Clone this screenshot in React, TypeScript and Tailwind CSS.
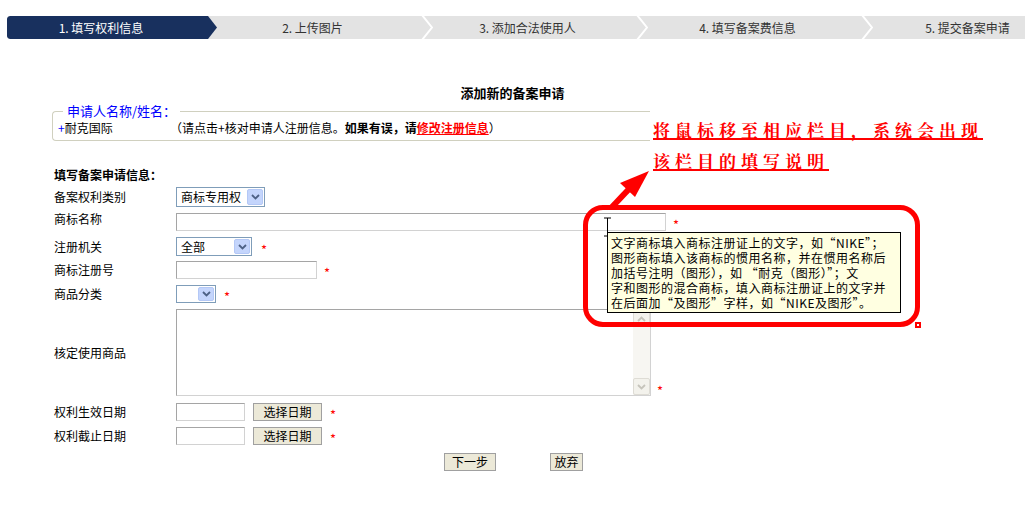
import React from 'react';

const Chevron = ({ color = '#4d6185' }: { color?: string }) => (
  <svg width="9" height="6" viewBox="0 0 9 6">
    <path d="M1 1 L4.5 4.5 L8 1" stroke={color} strokeWidth="1.8" fill="none" />
  </svg>
);

const Select = ({ className, value }: { className: string; value?: string }) => (
  <div className={`flex h-full items-center border border-[#7f9db9] bg-white ${className}`}>
    <span className="flex-1 pl-[4px] text-[12px] leading-none whitespace-nowrap">{value}</span>
    <span className="my-px mr-px flex h-[calc(100%-2px)] w-[16px] items-center justify-center rounded-[2px] border border-[#b4c8f6] bg-[#c4d5fc]">
      <Chevron />
    </span>
  </div>
);

const Input = ({ className }: { className: string }) => (
  <div className={`h-full border border-[#a5a5a5] border-r-[#d2d2d2] border-b-[#d2d2d2] bg-white ${className}`} />
);

const Star = ({ className = 'ml-[7px]' }: { className?: string }) => (
  <span className={`text-[13px] leading-none text-[#ff0000] ${className}`}>*</span>
);

const Btn = ({ children, className }: { children: React.ReactNode; className: string }) => (
  <div
    className={`flex h-full items-center justify-center border border-[#a0a0a0] bg-[#ece9d8] text-[12px] leading-none ${className}`}
  >
    {children}
  </div>
);

const SepChevron = () => (
  <svg className="absolute top-0 right-[-1px]" width="12" height="23" viewBox="0 0 12 23">
    <polyline points="1,-1 11,11.5 1,24" stroke="#ffffff" strokeWidth="2" fill="none" />
  </svg>
);

const steps = ['2. 上传图片', '3. 添加合法使用人', '4. 填写备案费信息', '5. 提交备案申请'];
const stepWidths = ['w-[215px]', 'w-[215px]', 'w-[225px]', 'w-[215px]'];

export default function App() {
  return (
    <div className="relative h-[515px] w-[1025px] overflow-hidden bg-white text-black [font-family:'Noto_Sans_CJK_SC',sans-serif]">
      {/* Step bar */}
      <div className="mt-[16px] ml-[7px] flex h-[23px] overflow-hidden rounded-l-[3px] bg-[#e3e3e3] text-[12px]">
        <div className="flex w-[210px] shrink-0 items-center justify-center rounded-l-[3px] bg-[#18305e] pr-[22px] text-white [clip-path:polygon(0_0,calc(100%_-_9px)_0,100%_50%,calc(100%_-_9px)_100%,0_100%)]">
          1. 填写权利信息
        </div>
        {steps.map((s, i) => (
          <div
            key={s}
            className={`relative flex shrink-0 items-center justify-center pr-[24px] whitespace-nowrap text-[#333333] ${stepWidths[i]}`}
          >
            {s}
            {i < 3 && <SepChevron />}
          </div>
        ))}
      </div>

      {/* Title */}
      <div className="mt-[47px] text-center text-[13px] leading-[14px] font-bold">添加新的备案申请</div>

      {/* Applicant fieldset */}
      <fieldset className="mt-[4px] ml-[52px] w-[598px] rounded-l-[4px] border border-r-0 border-[#d0d0bf]">
        <legend className="ml-[10px] px-[4px] text-[13px] leading-[14px] text-[#0000ff]">申请人名称/姓名：</legend>
        <div className="flex h-[22px] items-center pb-[3px] pl-[5px] text-[12px] leading-none whitespace-nowrap">
          <span className="w-[112px]">
            <span className="text-[#0000ff]">+</span>耐克国际
          </span>
          <span>
            （请点击+核对申请人注册信息。<b>如果有误，请</b>
            <b className="text-[#ff0000] underline">修改注册信息</b>）
          </span>
        </div>
      </fieldset>

      {/* Form */}
      <div className="ml-[54px] text-[12px]">
        <div className="mt-[28px] leading-[12px] font-bold">填写备案申请信息：</div>

        <div className="mt-[6px] flex h-[20px] items-center">
          <div className="w-[122px]">备案权利类别</div>
          <Select className="w-[89px]" value="商标专用权" />
        </div>

        <div className="mt-[6px] flex h-[18px] items-center">
          <div className="w-[122px] self-start leading-[12px]">商标名称</div>
          <Input className="w-[490px]" />
          <Star className="mt-[5px] ml-[7px]" />
        </div>

        <div className="mt-[6px] flex h-[19px] items-center">
          <div className="w-[122px]">注册机关</div>
          <Select className="w-[76px]" value="全部" />
          <Star className="mt-[5px] ml-[9px]" />
        </div>

        <div className="mt-[5px] flex h-[18px] items-center">
          <div className="w-[122px]">商标注册号</div>
          <Input className="w-[141px]" />
          <Star className="mt-[5px] ml-[7px]" />
        </div>

        <div className="mt-[6px] flex h-[18px] items-center">
          <div className="w-[122px]">商品分类</div>
          <Select className="w-[40px]" />
          <Star className="mt-[5px] ml-[8px]" />
        </div>

        <div className="mt-[6px] flex h-[87px] items-center">
          <div className="w-[122px]">核定使用商品</div>
          <div className="flex h-full w-[475px] border border-[#a5a5a5] border-r-[#d2d2d2] border-b-[#d2d2d2] bg-white">
            <div className="flex-1" />
            <div className="flex w-[17px] flex-col bg-[#f7f6f2]">
              <div className="flex h-[17px] items-center justify-center rounded-[2px] border border-[#dedcd5] bg-[#f3f2ec] [&_svg]:rotate-180">
                <Chevron color="#c6c4bb" />
              </div>
              <div className="flex-1" />
              <div className="flex h-[17px] items-center justify-center rounded-[2px] border border-[#dedcd5] bg-[#f3f2ec]">
                <Chevron color="#c6c4bb" />
              </div>
            </div>
          </div>
          <Star className="mb-[-1px] ml-[6px] self-end" />
        </div>

        <div className="mt-[7px] flex h-[18px] items-center">
          <div className="w-[122px]">权利生效日期</div>
          <Input className="w-[69px]" />
          <Btn className="ml-[8px] w-[69px]">选择日期</Btn>
          <Star className="mt-[5px] ml-[8px]" />
        </div>

        <div className="mt-[6px] flex h-[18px] items-center">
          <div className="w-[122px]">权利截止日期</div>
          <Input className="w-[69px]" />
          <Btn className="ml-[8px] w-[69px]">选择日期</Btn>
          <Star className="mt-[5px] ml-[8px]" />
        </div>

        <div className="mt-[8px] flex h-[18px]">
          <Btn className="ml-[390px] w-[52px]">下一步</Btn>
          <Btn className="ml-[54px] w-[33px]">放弃</Btn>
        </div>
      </div>

      {/* Annotation overlay */}
      <div className="absolute top-[117px] left-[653px] text-[17px] font-bold text-[#ff0000] [font-family:'Noto_Serif_CJK_SC','Noto_Sans_CJK_SC',serif]">
        <div className="inline-block border-b-2 border-[#ff0000] pb-px leading-[15px] tracking-[5px] whitespace-nowrap">
          将鼠标移至相应栏目，系统会出现
        </div>
        <br />
        <div className="mt-[10px] inline-block border-b-2 border-[#ff0000] pb-px leading-[15px] tracking-[5px] whitespace-nowrap">
          该栏目的填写说明
        </div>
      </div>

      {/* Arrow */}
      <svg className="absolute top-[160px] left-[600px]" width="60" height="60" viewBox="0 0 60 60">
        <line x1="12" y1="47" x2="29" y2="29" stroke="#ff0000" strokeWidth="6" />
        <polygon points="49,11 20,23 35,37" fill="#ff0000" />
      </svg>

      {/* Red highlight frame */}
      <div className="absolute top-[205px] left-[583px] h-[122px] w-[337px] rounded-[20px] border-[5px] border-[#ff0000]" />
      <div className="absolute top-[322px] left-[915px] h-[6px] w-[6px] border-[2px] border-[#ff0000] bg-white" />

      {/* Text cursor */}
      <svg className="absolute top-[217px] left-[603px]" width="9" height="20" viewBox="0 0 9 20">
        <path d="M1 1 H8 M4.5 1 V19 M1 19 H8" stroke="#000000" strokeWidth="1" fill="none" />
      </svg>

      {/* Tooltip */}
      <div className="absolute top-[232px] left-[607px] w-[294px] border border-black bg-[#ffffe1] px-[3px] py-[2px] text-[12px] leading-[15px] tracking-[0.5px] whitespace-nowrap">
        <div>文字商标填入商标注册证上的文字，如“NIKE”；</div>
        <div>图形商标填入该商标的惯用名称，并在惯用名称后</div>
        <div>加括号注明（图形），如 “耐克（图形）”；文</div>
        <div>字和图形的混合商标，填入商标注册证上的文字并</div>
        <div>在后面加“及图形”字样，如“NIKE及图形”。</div>
      </div>
    </div>
  );
}
